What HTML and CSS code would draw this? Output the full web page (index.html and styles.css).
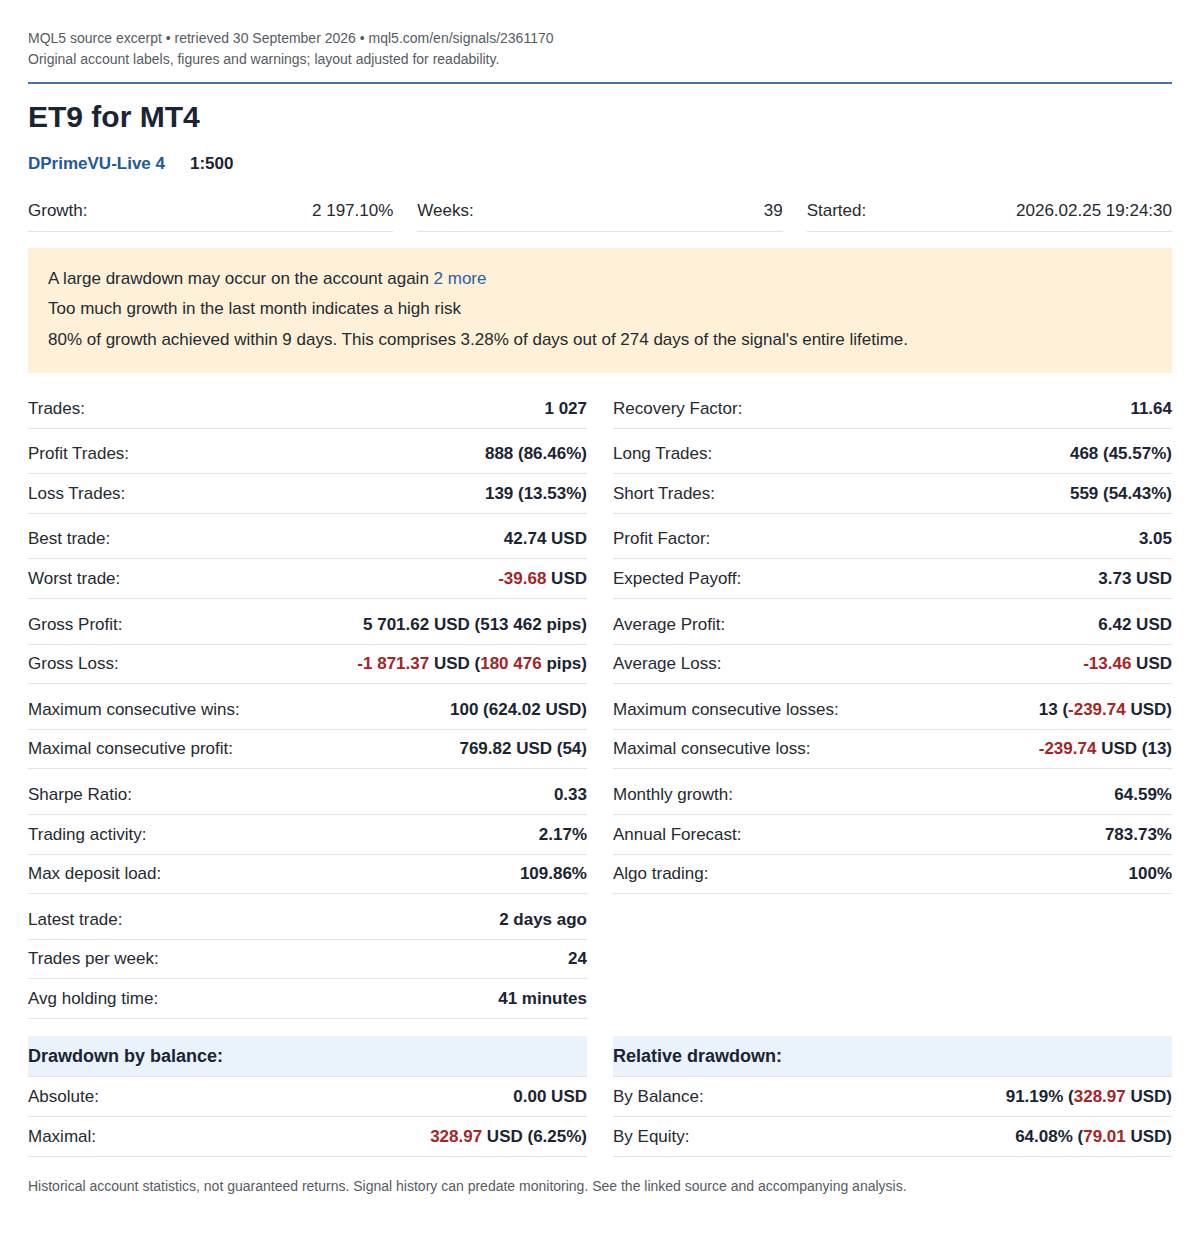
FILE: index.html
```html
<!DOCTYPE html>
<html lang="en">
<head>
<meta charset="utf-8">
<title>ET9 for MT4</title>
<link rel="stylesheet" href="styles.css">
</head>
<body>
<div class="page">
  <header class="meta">
    <div>MQL5 source excerpt • retrieved 30 September 2026 • mql5.com/en/signals/2361170</div>
    <div>Original account labels, figures and warnings; layout adjusted for readability.</div>
  </header>

  <h1 class="title">ET9 for MT4</h1>
  <div class="account">
    <span class="server">DPrimeVU-Live 4</span>
    <span class="leverage">1:500</span>
  </div>

  <div class="summary">
    <div class="row"><span class="label">Growth:</span><span class="plain">2 197.10%</span></div>
    <div class="row"><span class="label">Weeks:</span><span class="plain">39</span></div>
    <div class="row"><span class="label">Started:</span><span class="plain">2026.02.25 19:24:30</span></div>
  </div>

  <div class="warning">
    <p>A large drawdown may occur on the account again <span class="more">2 more</span></p>
    <p>Too much growth in the last month indicates a high risk</p>
    <p>80% of growth achieved within 9 days. This comprises 3.28% of days out of 274 days of the signal's entire lifetime.</p>
  </div>

  <div class="stats">
    <div class="col">
      <div class="group">
        <div class="row"><span class="label">Trades:</span><span class="value">1 027</span></div>
      </div>
      <div class="group">
        <div class="row"><span class="label">Profit Trades:</span><span class="value">888 (86.46%)</span></div>
        <div class="row"><span class="label">Loss Trades:</span><span class="value">139 (13.53%)</span></div>
      </div>
      <div class="group">
        <div class="row"><span class="label">Best trade:</span><span class="value">42.74 USD</span></div>
        <div class="row"><span class="label">Worst trade:</span><span class="value"><span class="neg">-39.68</span> USD</span></div>
      </div>
      <div class="group">
        <div class="row"><span class="label">Gross Profit:</span><span class="value">5 701.62 USD (513 462 pips)</span></div>
        <div class="row"><span class="label">Gross Loss:</span><span class="value"><span class="neg">-1 871.37</span> USD (<span class="neg">180 476</span> pips)</span></div>
      </div>
      <div class="group">
        <div class="row"><span class="label">Maximum consecutive wins:</span><span class="value">100 (624.02 USD)</span></div>
        <div class="row"><span class="label">Maximal consecutive profit:</span><span class="value">769.82 USD (54)</span></div>
      </div>
      <div class="group">
        <div class="row"><span class="label">Sharpe Ratio:</span><span class="value">0.33</span></div>
        <div class="row"><span class="label">Trading activity:</span><span class="value">2.17%</span></div>
        <div class="row"><span class="label">Max deposit load:</span><span class="value">109.86%</span></div>
      </div>
      <div class="group">
        <div class="row"><span class="label">Latest trade:</span><span class="value">2 days ago</span></div>
        <div class="row"><span class="label">Trades per week:</span><span class="value">24</span></div>
        <div class="row"><span class="label">Avg holding time:</span><span class="value">41 minutes</span></div>
      </div>
    </div>
    <div class="col">
      <div class="group">
        <div class="row"><span class="label">Recovery Factor:</span><span class="value">11.64</span></div>
      </div>
      <div class="group">
        <div class="row"><span class="label">Long Trades:</span><span class="value">468 (45.57%)</span></div>
        <div class="row"><span class="label">Short Trades:</span><span class="value">559 (54.43%)</span></div>
      </div>
      <div class="group">
        <div class="row"><span class="label">Profit Factor:</span><span class="value">3.05</span></div>
        <div class="row"><span class="label">Expected Payoff:</span><span class="value">3.73 USD</span></div>
      </div>
      <div class="group">
        <div class="row"><span class="label">Average Profit:</span><span class="value">6.42 USD</span></div>
        <div class="row"><span class="label">Average Loss:</span><span class="value"><span class="neg">-13.46</span> USD</span></div>
      </div>
      <div class="group">
        <div class="row"><span class="label">Maximum consecutive losses:</span><span class="value">13 (<span class="neg">-239.74</span> USD)</span></div>
        <div class="row"><span class="label">Maximal consecutive loss:</span><span class="value"><span class="neg">-239.74</span> USD (13)</span></div>
      </div>
      <div class="group">
        <div class="row"><span class="label">Monthly growth:</span><span class="value">64.59%</span></div>
        <div class="row"><span class="label">Annual Forecast:</span><span class="value">783.73%</span></div>
        <div class="row"><span class="label">Algo trading:</span><span class="value">100%</span></div>
      </div>
    </div>
  </div>

  <div class="drawdowns">
    <div class="col">
      <div class="dd-head">Drawdown by balance:</div>
      <div class="row"><span class="label">Absolute:</span><span class="value">0.00 USD</span></div>
      <div class="row"><span class="label">Maximal:</span><span class="value"><span class="neg">328.97</span> USD (6.25%)</span></div>
    </div>
    <div class="col">
      <div class="dd-head">Relative drawdown:</div>
      <div class="row"><span class="label">By Balance:</span><span class="value">91.19% (<span class="neg">328.97</span> USD)</span></div>
      <div class="row"><span class="label">By Equity:</span><span class="value">64.08% (<span class="neg">79.01</span> USD)</span></div>
    </div>
  </div>

  <footer class="note">Historical account statistics, not guaranteed returns. Signal history can predate monitoring. See the linked source and accompanying analysis.</footer>
</div>
</body>
</html>
```

FILE: styles.css
```css
html, body {
  margin: 0;
  padding: 0;
  background: #ffffff;
}

body {
  font-family: "Liberation Sans", Arial, sans-serif;
  color: #222a35;
}

.page {
  padding: 28px;
}

.meta {
  font-size: 14px;
  line-height: 21px;
  color: #555b63;
  padding-bottom: 12px;
  border-bottom: 2px solid #4a70a8;
}

.title {
  margin: 15px 0 0;
  font-size: 30px;
  line-height: 36px;
  font-weight: bold;
  color: #1a2433;
}

.account {
  margin-top: 19px;
  font-size: 17px;
  line-height: 20px;
  font-weight: bold;
  display: flex;
  gap: 25px;
}

.server {
  color: #24589a;
}

.leverage {
  color: #1a2433;
}

.summary {
  margin-top: 17px;
  display: grid;
  grid-template-columns: repeat(3, 1fr);
  gap: 24px;
}

.row {
  display: flex;
  justify-content: space-between;
  align-items: baseline;
  font-size: 17px;
  line-height: 19.6px;
  padding: 9.5px 0 9.5px;
  border-bottom: 1px solid #dfe3e8;
}

.summary .row {
  padding: 10px 0 10px;
}

.label {
  color: #252a31;
}

.plain {
  color: #252a31;
}

.value {
  font-weight: bold;
  color: #1a2433;
}

.neg {
  color: #a62424;
}

.warning {
  margin-top: 16px;
  background: #fff0d8;
  padding: 16px 20px 18px;
  font-size: 17px;
  line-height: 30.5px;
  color: #252a31;
}

.warning p {
  margin: 0;
}

.more {
  color: #2a62a8;
}

.stats {
  margin-top: 10px;
  display: grid;
  grid-template-columns: 1fr 1fr;
  column-gap: 26px;
  align-items: start;
}

.group {
  margin-top: 6px;
}

.drawdowns {
  margin-top: 17px;
  display: grid;
  grid-template-columns: 1fr 1fr;
  column-gap: 26px;
}

.dd-head {
  background: #eaf2fb;
  font-size: 18px;
  line-height: 21px;
  font-weight: bold;
  color: #1a2433;
  padding: 10px 0 9px;
  border-bottom: 1px solid #dfe3e8;
}

.drawdowns .row {
  padding: 9.8px 0;
}

.note {
  margin-top: 20px;
  font-size: 14px;
  line-height: 18px;
  color: #555b63;
}
```
